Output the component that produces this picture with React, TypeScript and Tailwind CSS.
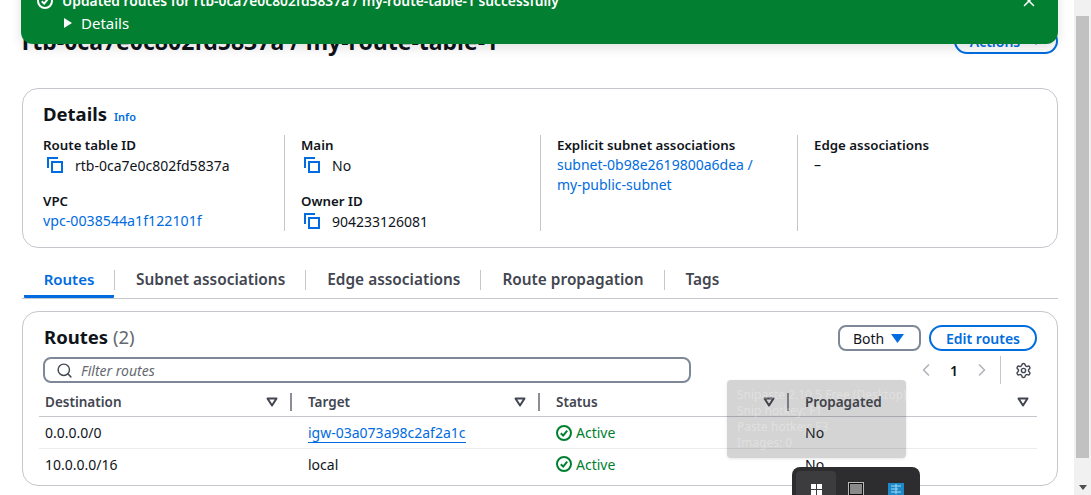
import { ChevronLeft, ChevronRight, Search, Settings, X } from 'lucide-react';

function CopyIcon() {
  return (
    <svg width="16" height="16" viewBox="0 0 16 16" fill="none" stroke="#006ce0" strokeWidth="2" className="shrink-0">
      <path d="M1 11V1h10" />
      <rect x="5" y="5" width="10" height="10" />
    </svg>
  );
}

function Caret() {
  return (
    <svg width="12" height="10" viewBox="0 0 12 10">
      <path d="M1.5 1.5h9L6 8.5z" fill="none" stroke="#424650" strokeWidth="2" strokeLinejoin="round" />
    </svg>
  );
}

function ActiveIcon() {
  return (
    <svg width="16" height="16" viewBox="0 0 16 16" fill="none" stroke="#00802f" strokeWidth="2" className="shrink-0">
      <circle cx="8" cy="8" r="7" />
      <path d="M4.8 8.2 7.2 10.6 11.2 5.6" />
    </svg>
  );
}

function Label({ children }: { children: string }) {
  return <div className="text-[13.3px] leading-[20px] font-semibold text-[#0f141a]">{children}</div>;
}

const tabs = ['Subnet associations', 'Edge associations', 'Route propagation', 'Tags'];

const columns = ['Destination', 'Target', 'Status', 'Propagated'];

export default function App() {
  return (
    <div className="relative flex h-[495px] w-[1091px] overflow-hidden bg-white font-['Noto_Sans',sans-serif] text-[14px] text-[#0f141a]">
      <main className="w-[1074px] shrink-0 pl-[22px] pr-[16px] pt-[22px]">
        <div className="flex h-8 items-end justify-between">
          <h1 className="text-[23px] leading-[26px] font-bold whitespace-nowrap">rtb-0ca7e0c802fd5837a / my-route-table-1</h1>
          <button className="flex h-[26px] w-[104px] items-center justify-center gap-[10px] rounded-full border-2 border-[#006ce0] font-semibold text-[#006ce0]">
            Actions
            <svg width="12" height="8" viewBox="0 0 12 8"><path d="M0 0h12L6 8z" fill="#006ce0" /></svg>
          </button>
        </div>

        <section className="mt-[34px] h-[160px] rounded-2xl border border-[#c6c6cd] px-[20px] pt-[12px]">
          <h2 className="flex h-[26px] items-baseline gap-[7px] text-[18.5px] leading-[26px] font-bold">
            Details
            <a className="text-[11px] font-semibold text-[#006ce0]">Info</a>
          </h2>
          <div className="mt-[8px] grid h-[96px] grid-cols-[241px_256px_257px_1fr]">
            <div className="flex flex-col gap-[16px]">
              <div>
                <Label>Route table ID</Label>
                <div className="flex h-[20px] items-center gap-[12px] pl-[4px]">
                  <CopyIcon />
                  <span>rtb-0ca7e0c802fd5837a</span>
                </div>
              </div>
              <div>
                <Label>VPC</Label>
                <a className="block text-[14.2px] leading-[20px] text-[#006ce0]">vpc-0038544a1f122101f</a>
              </div>
            </div>
            <div className="flex flex-col gap-[16px] border-l border-[#c6c6cd] pl-[16px]">
              <div>
                <Label>Main</Label>
                <div className="flex h-[20px] items-center gap-[12px] pl-[3px]">
                  <CopyIcon />
                  <span>No</span>
                </div>
              </div>
              <div>
                <Label>Owner ID</Label>
                <div className="flex h-[20px] items-center gap-[12px] pl-[3px]">
                  <CopyIcon />
                  <span>904233126081</span>
                </div>
              </div>
            </div>
            <div className="border-l border-[#c6c6cd] pl-[16px]">
              <Label>Explicit subnet associations</Label>
              <a className="block w-[210px] leading-[20px] text-[#006ce0]">subnet-0b98e2619800a6dea / my-public-subnet</a>
            </div>
            <div className="border-l border-[#c6c6cd] pl-[16px]">
              <Label>Edge associations</Label>
              <div className="leading-[20px]">–</div>
            </div>
          </div>
        </section>

        <nav className="mt-[20px] flex h-[31px] border-b border-[#c6c6cd] pl-[2px] text-[15.4px] font-semibold text-[#424650]">
          <div className="flex h-[30px] w-[90px] items-center justify-center rounded-[1px] border-b-[3px] border-[#006ce0] pb-[5px] text-[15px] text-[#006ce0]">Routes</div>
          {tabs.map((tab) => (
            <div key={tab} className="flex h-[30px] items-center pb-[6px]">
              <span className="flex h-[20px] items-center border-l border-[#c6c6cd] pl-[21px] pr-[20px]">{tab}</span>
            </div>
          ))}
        </nav>

        <section className="mt-[12px] h-[175px] rounded-2xl border border-[#c6c6cd] pl-[16px] pr-[20px] pt-[13px]">
          <div className="flex h-[26px] items-center justify-between pl-[5px]">
            <h2 className="pb-[2px] text-[18.5px] leading-[24px] font-bold">
              Routes <span className="font-normal text-[#656871]">(2)</span>
            </h2>
            <div className="flex gap-[8px]">
              <button className="flex h-[26px] w-[83px] items-center justify-between rounded-lg border-2 border-[#7d8998] pl-[13px] pr-[15px]">
                Both
                <svg width="13" height="9" viewBox="0 0 13 9"><path d="M0 0h13L6.5 9z" fill="#006ce0" /></svg>
              </button>
              <button className="h-[26px] w-[108px] rounded-full border-2 border-[#006ce0] font-semibold text-[#006ce0]">Edit routes</button>
            </div>
          </div>

          <div className="mt-[5px] flex h-[28px] items-center justify-between pl-[4px]">
            <div className="flex h-[26px] w-[648px] items-center gap-[8px] rounded-lg border-2 border-[#7d8998] pl-[11px]">
              <Search size={17} strokeWidth={2} className="text-[#424650]" />
              <span className="text-[14px] text-[#656871] italic">Filter routes</span>
            </div>
            <div className="flex h-[28px] items-center">
              <ChevronLeft size={20} strokeWidth={2} className="text-[#b4b4bb]" />
              <span className="w-[36px] text-center font-semibold">1</span>
              <ChevronRight size={20} strokeWidth={2} className="text-[#b4b4bb]" />
              <span className="ml-[8px] h-[28px] border-l border-[#c6c6cd]" />
              <Settings size={17} strokeWidth={2} className="ml-[14px] mr-[5px] text-[#424650]" />
            </div>
          </div>

          <div className="mt-[4px] grid grid-cols-[263px_248px_249px_238px] border-b border-[#c6c6cd]">
            {columns.map((col, i) => (
              <div key={col} className={`flex h-[28px] items-center justify-between pl-[6px] ${i < 3 ? 'pr-[10px]' : 'pr-[8px]'}`}>
                <span className="text-[13.5px] font-semibold text-[#424650]">{col}</span>
                <span className="flex items-center gap-[12px]">
                  <Caret />
                  {i < 3 && <span className="h-[18px] border-l-2 border-[#8c8c94]" />}
                </span>
              </div>
            ))}
          </div>
          <div className="grid h-[32px] grid-cols-[263px_248px_249px_238px] items-center border-b border-[#ebebf0]">
            <span className="pl-[6px]">0.0.0.0/0</span>
            <a className="pl-[6px]"><span className="border-b border-[#006ce0] text-[#006ce0]">igw-03a073a98c2af2a1c</span></a>
            <span className="flex items-center gap-[4px] pl-[6px] text-[#00802f]"><ActiveIcon />Active</span>
            <span className="pl-[6px]">No</span>
          </div>
          <div className="grid h-[30px] grid-cols-[263px_248px_249px_238px] items-center">
            <span className="pl-[6px]">10.0.0.0/16</span>
            <span className="pl-[6px]">local</span>
            <span className="flex items-center gap-[4px] pl-[6px] text-[#00802f]"><ActiveIcon />Active</span>
            <span className="pl-[6px]">No</span>
          </div>
        </section>
      </main>

      <div className="flex w-[17px] shrink-0 flex-col bg-[#f1f1f1]">
        <div className="h-[16px]" />
        <div className="mx-[2px] h-[442px] bg-[#c1c1c1]" />
        <div className="mt-auto flex h-[16px] items-center justify-center">
          <svg width="8" height="5" viewBox="0 0 8 5"><path d="M0 0h8L4 5z" fill="#505050" /></svg>
        </div>
      </div>

      {/* success flash sits over the page header */}
      <div className="absolute left-[21px] top-[-14px] h-[58px] w-[1037px] rounded-b-[12px] bg-[#037f31] pl-[16px] pr-[20px] pt-[5px] text-white shadow-[0_4px_12px_rgba(0,0,0,0.12)]">
        <div className="flex h-[20px] items-center gap-[9px]">
          <svg width="16" height="16" viewBox="0 0 16 16" fill="none" stroke="white" strokeWidth="2"><circle cx="8" cy="8" r="7" /><path d="M4.8 8.2 7.2 10.6 11.2 5.6" /></svg>
          <span className="flex-1 text-[13.8px] font-semibold">Updated routes for rtb-0ca7e0c802fd5837a / my-route-table-1 successfully</span>
          <X size={18} strokeWidth={2} />
        </div>
        <div className="mt-[2px] flex h-[20px] items-center gap-[9px] pl-[27px] text-[15px]">
          <svg width="8" height="10" viewBox="0 0 8 10"><path d="M0 0l8 5-8 5z" fill="white" /></svg>
          Details
        </div>
      </div>

      {/* snipaste tray tooltip */}
      <div className="absolute left-[727px] top-[380px] h-[78px] w-[179px] rounded-[4px] bg-[rgba(60,60,60,0.22)] px-[10px] pt-[7px] text-[12px] leading-[16px] whitespace-nowrap text-white/30 shadow-[0_1px_3px_rgba(0,0,0,0.1)]">
        <div>Snipaste 2.10.5 Free (Desktop)</div>
        <div>Snip hotkey: F1</div>
        <div>Paste hotkey: F3</div>
        <div>Images: 0</div>
      </div>

      {/* windows taskbar */}
      <div className="absolute left-[792px] top-[467px] flex h-[28px] w-[128px] items-start rounded-t-lg bg-[#2d2d30] pl-[4px] pt-[4px]">
        <div className="flex h-[24px] w-[40px] justify-center rounded-t-[4px] bg-[#3c3c3f] pt-[13px]">
          <div className="grid h-[11px] w-[11px] grid-cols-2 gap-[1px]">
            <span className="bg-white" /><span className="bg-white" /><span className="bg-white" /><span className="bg-white" />
          </div>
        </div>
        <div className="ml-[13px] mt-[12px] h-[12px] w-[14px] border border-[#111] bg-[#8a8a8a] outline outline-[#bbb]" />
        <svg width="16" height="12" viewBox="0 0 16 12" className="ml-[25px] mt-[12px]">
          <rect width="16" height="12" fill="#1e88c9" />
          <path d="M3 3h10M3 6h7M3 9h10M8 1v10" stroke="#9fdcf5" strokeWidth="1" fill="none" />
        </svg>
      </div>
    </div>
  );
}
